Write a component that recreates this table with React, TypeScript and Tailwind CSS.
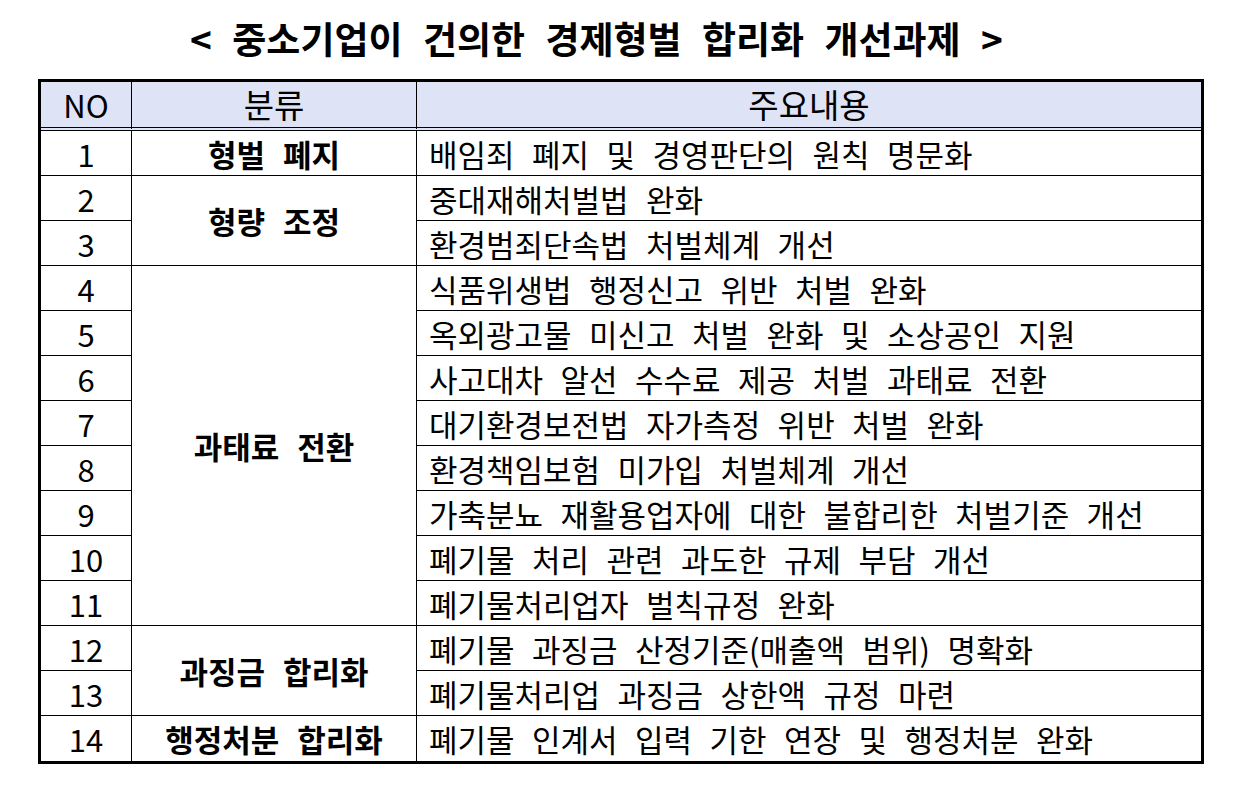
const ROWS: { no: number; cat?: string; span?: number; text: string }[] = [
  { no: 1, cat: "형벌 폐지", span: 1, text: "배임죄 폐지 및 경영판단의 원칙 명문화" },
  { no: 2, cat: "형량 조정", span: 2, text: "중대재해처벌법 완화" },
  { no: 3, text: "환경범죄단속법 처벌체계 개선" },
  { no: 4, cat: "과태료 전환", span: 8, text: "식품위생법 행정신고 위반 처벌 완화" },
  { no: 5, text: "옥외광고물 미신고 처벌 완화 및 소상공인 지원" },
  { no: 6, text: "사고대차 알선 수수료 제공 처벌 과태료 전환" },
  { no: 7, text: "대기환경보전법 자가측정 위반 처벌 완화" },
  { no: 8, text: "환경책임보험 미가입 처벌체계 개선" },
  { no: 9, text: "가축분뇨 재활용업자에 대한 불합리한 처벌기준 개선" },
  { no: 10, text: "폐기물 처리 관련 과도한 규제 부담 개선" },
  { no: 11, text: "폐기물처리업자 벌칙규정 완화" },
  { no: 12, cat: "과징금 합리화", span: 2, text: "폐기물 과징금 산정기준(매출액 범위) 명확화" },
  { no: 13, text: "폐기물처리업 과징금 상한액 규정 마련" },
  { no: 14, cat: "행정처분 합리화", span: 1, text: "폐기물 인계서 입력 기한 연장 및 행정처분 완화" },
];

export default function App() {
  return (
    <div className="w-[1247px] h-[812px] bg-white text-black font-['Noto_Sans_CJK_KR','Noto_Sans',sans-serif]">
      {/* Title */}
      <div className="h-[79px] flex items-center justify-center pb-[2px] pr-[54px]">
        <h1 className="text-[37px] font-bold leading-none [word-spacing:12px]">
          &lt; 중소기업이 건의한 경제형벌 합리화 개선과제 &gt;
        </h1>
      </div>

      <div className="ml-[38px] w-[1166px] border-[3px] border-black">
        <table className="w-full table-fixed border-separate border-spacing-0">
          <colgroup>
            <col className="w-[91px]" />
            <col className="w-[285px]" />
            <col />
          </colgroup>
          <thead>
            <tr className="h-[49px] bg-[#dee4f5]">
              <th className="border-r border-b-4 border-double border-r-black border-b-black font-normal text-[31px] leading-none">
                NO
              </th>
              <th className="border-r border-b-4 border-double border-r-black border-b-black font-normal text-[33px] leading-none">
                분류
              </th>
              <th className="border-b-4 border-double border-b-black font-normal text-[33px] leading-none">
                주요내용
              </th>
            </tr>
          </thead>
          <tbody>
            {ROWS.map((r, i) => {
              const last = i === ROWS.length - 1;
              return (
                <tr key={r.no} className="h-[45px]">
                  <td
                    className={`border-r border-black text-center text-[31px] leading-none ${last ? "" : "border-b"}`}
                  >
                    {r.no}
                  </td>
                  {r.cat && (
                    <td
                      rowSpan={r.span}
                      className={`border-r border-black text-center font-bold text-[31px] leading-none [word-spacing:11px] ${
                        last ? "" : "border-b"
                      }`}
                    >
                      {r.cat}
                    </td>
                  )}
                  <td
                    className={`border-black pl-[12px] text-[31px] leading-none whitespace-nowrap [word-spacing:10.5px] ${
                      last ? "" : "border-b"
                    }`}
                  >
                    {r.text}
                  </td>
                </tr>
              );
            })}
          </tbody>
        </table>
      </div>
    </div>
  );
}
